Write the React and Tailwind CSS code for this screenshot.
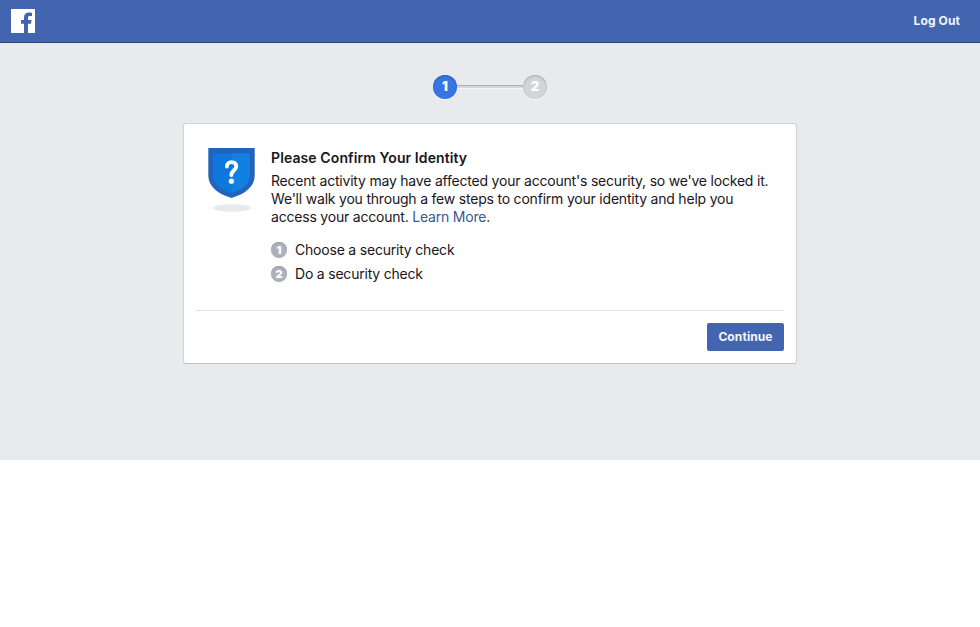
function FacebookMark() {
  return (
    <svg className="block h-6 w-6" viewBox="0 0 24 24" aria-hidden="true">
      <path
        fill="#fff"
        d="M.6 0h22.800a.6.6 0 0 1 .6.6v22.800a.6.6 0 0 1-.6.6H17v-9.200h3l.5-3.800H17V8.800c0-1.100.3-1.800 1.800-1.800H21V3.700a25 25 0 0 0-3-.2c-3 0-5 1.700-5 4.900V11h-3v3.800h3V24H.6a.6.6 0 0 1-.6-.6V.6A.6.6 0 0 1 .6 0z"
      />
    </svg>
  );
}

function ShieldIcon() {
  return (
    <svg className="block h-16 w-12" viewBox="0 0 48 64" aria-hidden="true">
      <ellipse cx="24" cy="60" rx="19" ry="3.800" fill="#e9eaee" />
      <path fill="#2264bb" d="M.3 0h46.400v27.500c0 11.500-10 18.500-23.200 22.500C10.300 46 .3 39 .3 27.500z" />
      <path fill="#0e77dc" d="M5 5.200h18.500v40C12.500 41.500 5 35.500 5 27.500z" />
      <path fill="#1280e2" d="M42 5.200H23.500v40C34.500 41.500 42 35.500 42 27.500z" />
      <path
        d="M18.900 18.600c0-2.800 2-4.500 4.600-4.500 2.900 0 4.700 1.700 4.700 4.300 0 4-4.900 4.300-4.900 8.600"
        fill="none"
        stroke="#fff"
        strokeWidth="3.900"
        strokeLinecap="round"
      />
      <circle cx="23.400" cy="33.200" r="2.600" fill="#fff" />
    </svg>
  );
}

function Step({ number, label }) {
  return (
    <li className="flex h-6 items-center gap-2">
      <span className="flex h-4 w-4 items-center justify-center rounded-full bg-[#acb1bb] text-[11px] leading-4 font-black tracking-normal text-white shadow-[inset_0_1px_1px_#969ba5]">
        {number}
      </span>
      <span>{label}</span>
    </li>
  );
}

export default function App() {
  return (
    <div className="min-h-screen bg-white font-['Inter','Liberation_Sans',sans-serif] text-[#1a1520]">
      <header className="flex h-[43px] items-center justify-between border-b border-[#29487d] bg-[#4365b0] pr-5 pl-[11px]">
        <FacebookMark />
        <a className="text-xs leading-4 font-bold tracking-[0.1px] text-[#f3f5fa]">Log Out</a>
      </header>

      <main className="flex h-[417px] flex-col items-center bg-[#e9eaee] pt-8">
        <div className="flex h-6 items-center text-[13px] font-black text-white">
          <span className="flex h-6 w-6 items-center justify-center rounded-full bg-[#3875e2] shadow-[inset_0_1px_2px_#285fba,0_1px_0_#f6f7f9]">
            1
          </span>
          <span className="h-[4px] w-[66px] border-t border-b border-t-[#acb0b6] border-b-[#f6f7f9] bg-[#d3d6db]" />
          <span className="flex h-6 w-6 items-center justify-center rounded-full bg-[#d1d4d9] shadow-[inset_0_1px_2px_#a5a9b0,0_1px_0_#f6f7f9]">
            2
          </span>
        </div>

        <section className="mt-6 h-[241px] w-[614px] rounded-[3px] border border-[#d0d1d5] border-b-[#bfc1c6] bg-white px-3">
          <div className="flex h-[187px] gap-4 border-b border-[#dddfe2] pt-6 pl-3">
            <ShieldIcon />
            <div className="-ml-px text-sm leading-[18px] tracking-[-0.205px]">
              <h1 className="pt-px font-semibold tracking-[0.1px]">Please Confirm Your Identity</h1>
              <p className="mt-[5px] whitespace-nowrap">
                Recent activity may have affected your account&apos;s security, so we&apos;ve locked it.
                <br />
                We&apos;ll walk you through a few steps to confirm your identity and help you
                <br />
                access your account. <a className="text-[#385898]">Learn More</a>.
              </p>
              <ol className="mt-3">
                <Step number="1" label="Choose a security check" />
                <Step number="2" label="Do a security check" />
              </ol>
            </div>
          </div>
          <div className="flex justify-end pt-3">
            <button className="h-7 w-[77px] rounded-[2px] bg-[#4365b0] text-xs font-bold tracking-[0.1px] text-[#f5f6fa]">
              Continue
            </button>
          </div>
        </section>
      </main>
    </div>
  );
}
